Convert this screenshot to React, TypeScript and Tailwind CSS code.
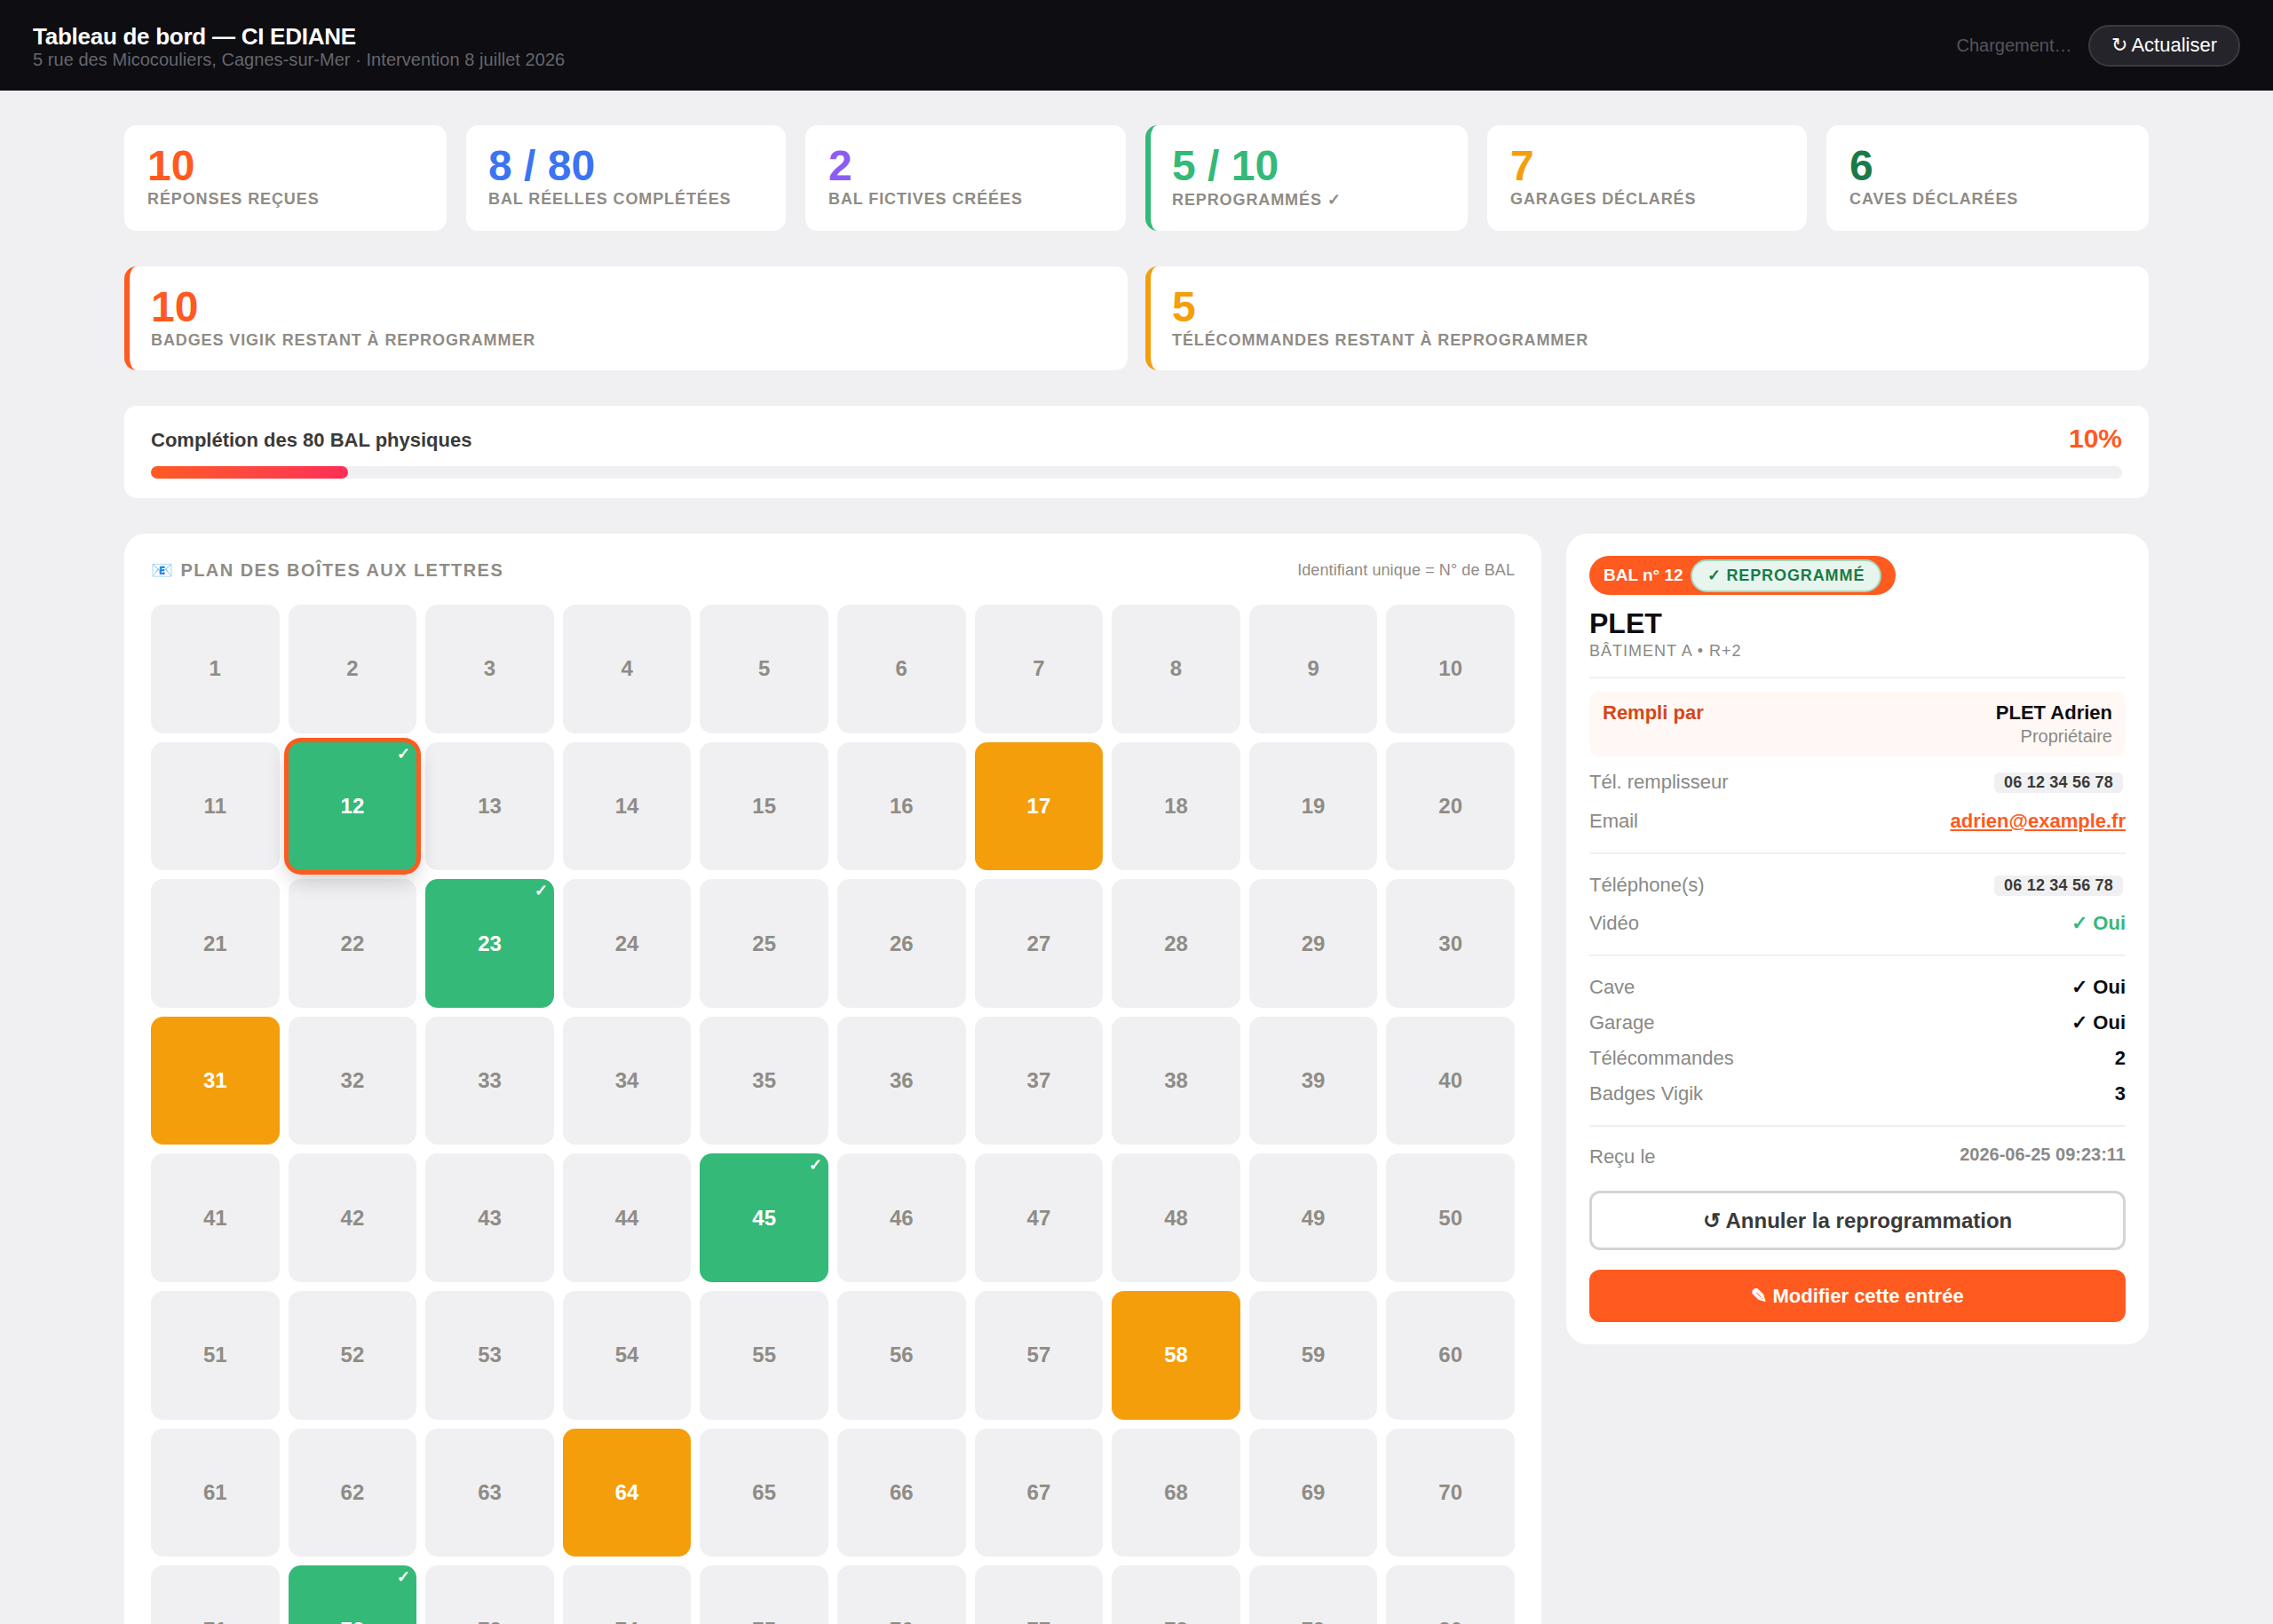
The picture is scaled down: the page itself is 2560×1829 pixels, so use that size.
const stats = [
  { value: '10', label: 'Réponses reçues', color: 'text-[#ff5a1f]' },
  { value: '8 / 80', label: 'BAL réelles complétées', color: 'text-[#3b74f2]', accent: 'px-[25px]' },
  { value: '2', label: 'BAL fictives créées', color: 'text-[#8b5cf6]' },
  { value: '5 / 10', label: 'Reprogrammés ✓', color: 'text-[#34b978]', accent: 'border-l-[6px] border-[#34b978] pl-[24px]' },
  { value: '7', label: 'Garages déclarés', color: 'text-[#f59e0b]' },
  { value: '6', label: 'Caves déclarées', color: 'text-[#1a7a4a]' },
];

const green = [12, 23, 45, 72];
const amber = [17, 31, 58, 64];

function Stat({ value, label, color, className }: { value: string; label: string; color: string; className: string }) {
  return (
    <div className={`bg-white rounded-[14px] pt-[22px] pb-[23px] ${className}`}>
      <div className={`text-[48px] leading-none font-bold ${color}`}>{value}</div>
      <div className="mt-[3px] text-[18px] font-bold uppercase tracking-[0.9px] text-[#8f8c86]">{label}</div>
    </div>
  );
}

function Cell({ n }: { n: number }) {
  const isGreen = green.includes(n);
  const isAmber = amber.includes(n);
  const selected = n === 12;
  let tone = 'bg-[#f0f0f2] text-[#8f8c86]';
  if (isGreen) tone = 'bg-[#34b978] text-white';
  if (isAmber) tone = 'bg-[#f59e0b] text-white';
  return (
    <div
      className={`relative aspect-square rounded-[14px] flex items-center justify-center text-[24px] font-bold ${tone} ${
        selected ? 'z-10 ring-[5px] ring-[#ff5a1f] shadow-[0_10px_24px_rgba(0,0,0,0.22)]' : ''
      }`}
    >
      {n}
      {isGreen && <span className="absolute top-[3px] right-[7px] text-[18px] leading-[20px]">✓</span>}
    </div>
  );
}

function Row({ label, children, className = '' }: { label: string; children: React.ReactNode; className?: string }) {
  return (
    <div className={`flex justify-between items-center text-[22px] ${className}`}>
      <span className="text-[#8a8a86]">{label}</span>
      {children}
    </div>
  );
}

function Phone() {
  return (
    <span className="mr-[3px] rounded-[6px] bg-[#f0f0f2] px-[11px] py-[1px] text-[18px] font-bold tracking-[0.2px] text-[#3a3a3a]">
      06 12 34 56 78
    </span>
  );
}

export default function App() {
  return (
    <div className="h-screen overflow-hidden bg-[#f0f0f2] [line-height:normal] [font-family:'Liberation_Sans',sans-serif]">
      {/* Header */}
      <header className="h-[102px] bg-[#0d0d12] flex items-center justify-between pl-[37px] pr-[37px]">
        <div className="mt-[4px]">
          <div className="text-[26px] leading-[28px] font-bold tracking-[-0.26px] text-white">Tableau de bord — CI EDIANE</div>
          <div className="text-[20px] leading-[24px] tracking-[0.05px] text-[#66666c]">
            5 rue des Micocouliers, Cagnes-sur-Mer · Intervention 8 juillet 2026
          </div>
        </div>
        <div className="flex items-center gap-[18px]">
          <span className="text-[20px] text-[#55555b]">Chargement…</span>
          <button className="h-[47px] rounded-full border-2 border-[#3a3a42] bg-[#24242a] px-[24px] text-[22px] text-white">
            ↻ Actualiser
          </button>
        </div>
      </header>

      <main className="w-[2280px] mx-auto pt-[39px]">
        {/* Stats */}
        <div className="grid grid-cols-[363px_360px_361px_363px_360px_363px] auto-rows-[119px] gap-[22px]">
          {stats.map((s) => (
            <Stat key={s.label} value={s.value} label={s.label} color={s.color} className={s.accent ?? 'px-[26px]'} />
          ))}
        </div>

        <div className="mt-[40px] grid grid-cols-2 gap-[20px]">
          <Stat
            value="10"
            label="Badges Vigik restant à reprogrammer"
            color="text-[#ff5a1f]"
            className="border-l-[6px] border-[#ff5a1f] pl-[24px]"
          />
          <Stat
            value="5"
            label="Télécommandes restant à reprogrammer"
            color="text-[#f59e0b]"
            className="border-l-[6px] border-[#f59e0b] pl-[24px]"
          />
        </div>

        {/* Progress */}
        <div className="mt-[40px] bg-white rounded-[14px] px-[30px] pt-[22px] pb-[22px]">
          <div className="h-[34px] mb-[12px] flex items-center justify-between">
            <span className="text-[22px] font-bold text-[#3a3a3a]">Complétion des 80 BAL physiques</span>
            <span className="mb-[5px] text-[30px] font-bold text-[#ff5a1f]">10%</span>
          </div>
          <div className="h-[14px] rounded-full bg-[#f0f0f2]">
            <div className="h-full w-[10%] rounded-full bg-gradient-to-r from-[#ff5a1f] to-[#ff2d55]" />
          </div>
        </div>

        <div className="mt-[40px] grid grid-cols-[1fr_656px] gap-[28px] items-start">
          {/* Mailbox plan */}
          <section className="bg-white rounded-[24px] px-[30px] pt-[28px] pb-[30px]">
            <div className="h-[26px] mb-[26px] flex items-center justify-between">
              <h2 className="text-[20px] font-bold uppercase tracking-[1.44px] text-[#8f8c86]">📧 Plan des boîtes aux lettres</h2>
              <span className="text-[18px] tracking-[0.1px] text-[#8f8c86]">Identifiant unique = N° de BAL</span>
            </div>
            <div className="grid grid-cols-10 gap-[10px]">
              {Array.from({ length: 80 }, (_, i) => (
                <Cell key={i + 1} n={i + 1} />
              ))}
            </div>
          </section>

          {/* Detail */}
          <aside className="bg-white rounded-[24px] px-[26px] pt-[25px] pb-[25px]">
            <div className="inline-flex items-center h-[44px] rounded-full bg-[#ff5a1f] pl-[16px] pr-[16px]">
              <span className="text-[19px] font-bold text-white">BAL n° 12</span>
              <span className="ml-[8px] h-[37px] flex items-center rounded-full border-2 border-[#a3d8bc] bg-[#e8f5ee] px-[17px] text-[18px] font-bold tracking-[0.9px] text-[#1a7a4a]">
                ✓ REPROGRAMMÉ
              </span>
            </div>
            <div className="mt-[14px] text-[32px] leading-[36px] font-bold text-[#0d0d12]">PLET</div>
            <div className="mt-[1px] text-[18px] leading-[24px] uppercase tracking-[1px] text-[#8a8a86]">Bâtiment A • R+2</div>
            <div className="mt-[17px] h-[2px] bg-[#f0f0f2]" />

            <div className="mt-[15px] h-[73px] rounded-[12px] bg-[#fff8f4] px-[15px] pt-[11px] flex justify-between">
              <span className="text-[22px] font-bold text-[#d4471a]">Rempli par</span>
              <div className="text-right">
                <div className="text-[22px] font-bold text-[#0d0d12]">PLET Adrien</div>
                <div className="mt-[2px] text-[20px] text-[#8a8a86]">Propriétaire</div>
              </div>
            </div>

            <Row label="Tél. remplisseur" className="mt-[14px] h-[30px]"><Phone /></Row>
            <Row label="Email" className="mt-[14px] h-[30px]">
              <span className="font-bold text-[#ff5a1f] underline">adrien@example.fr</span>
            </Row>
            <div className="mt-[20px] h-[2px] bg-[#f0f0f2]" />

            <Row label="Téléphone(s)" className="mt-[20px] h-[30px]"><Phone /></Row>
            <Row label="Vidéo" className="mt-[13px] h-[30px]">
              <span className="font-bold text-[#34b978]">✓ Oui</span>
            </Row>
            <div className="mt-[20px] h-[2px] bg-[#f0f0f2]" />

            <div className="mt-[20px] flex flex-col gap-[10px]">
              <Row label="Cave" className="h-[30px]"><span className="font-bold text-[#0d0d12]">✓ Oui</span></Row>
              <Row label="Garage" className="h-[30px]"><span className="font-bold text-[#0d0d12]">✓ Oui</span></Row>
              <Row label="Télécommandes" className="h-[30px]"><span className="font-bold text-[#0d0d12]">2</span></Row>
              <Row label="Badges Vigik" className="h-[30px]"><span className="font-bold text-[#0d0d12]">3</span></Row>
            </div>
            <div className="mt-[20px] h-[2px] bg-[#f0f0f2]" />

            <div className="mt-[18px] h-[28px] flex justify-between items-start text-[22px]">
              <span className="mt-[3px] text-[#8a8a86]">Reçu le</span>
              <span className="mt-[2px] text-[20px] font-bold text-[#8a8a86]">2026-06-25 09:23:11</span>
            </div>

            <button className="mt-[26px] w-full h-[67px] rounded-[12px] border-[3px] border-[#d4d4d0] bg-white text-[24px] font-bold text-[#3a3a3a]">
              ↺ Annuler la reprogrammation
            </button>
            <button className="mt-[22px] w-full h-[59px] rounded-[12px] bg-[#ff5a1f] text-[22px] font-bold text-white">
              ✎ Modifier cette entrée
            </button>
          </aside>
        </div>
      </main>
    </div>
  );
}
